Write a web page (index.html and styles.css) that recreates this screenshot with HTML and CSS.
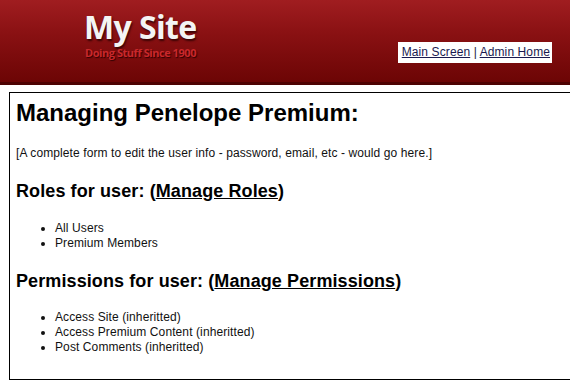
FILE: index.html
```html
<!DOCTYPE html>
<html>
<head>
<meta charset="utf-8">
<title>My Site</title>
<link rel="stylesheet" href="styles.css">
</head>
<body>
<div class="header">
  <div class="logo">
    <div class="logo-title">My Site</div>
    <div class="logo-tag">Doing Stuff Since 1900</div>
  </div>
  <div class="nav"><a href="#">Main Screen</a> | <a href="#">Admin Home</a></div>
</div>
<div class="content">
  <h1>Managing Penelope Premium:</h1>
  <p>[A complete form to edit the user info - password, email, etc - would go here.]</p>
  <h2>Roles for user: (<a href="#">Manage Roles</a>)</h2>
  <ul>
    <li>All Users</li>
    <li>Premium Members</li>
  </ul>
  <h2>Permissions for user: (<a href="#">Manage Permissions</a>)</h2>
  <ul class="perms">
    <li>Access Site (inheritted)</li>
    <li>Access Premium Content (inheritted)</li>
    <li>Post Comments (inheritted)</li>
  </ul>
</div>
</body>
</html>
```
FILE: styles.css
```css
html, body {
  margin: 0;
  padding: 0;
  overflow: hidden;
  background: #fff;
}
body {
  font-family: "Liberation Sans", Arial, sans-serif;
  color: #111;
}
.header {
  height: 82px;
  border-bottom: 3px solid #4e0303;
  background: linear-gradient(to bottom, #a01d20 0%, #8a1113 40%, #6c0505 100%);
  display: flex;
  justify-content: space-between;
  padding: 0 18px 0 84px;
}
.logo {
  padding-top: 8px;
}
.logo-title {
  font-family: "Open Sans", sans-serif;
  font-weight: 700;
  font-size: 32px;
  line-height: 38px;
  color: #f4f4f4;
  letter-spacing: -0.6px;
  text-shadow: 1px 2px 2px rgba(40, 0, 0, 0.8);
}
.logo-tag {
  font-family: "Open Sans", sans-serif;
  font-weight: 700;
  font-size: 11px;
  line-height: 14px;
  color: #c9282b;
  letter-spacing: -0.45px;
  text-shadow: 1px 1px 1px rgba(40, 0, 0, 0.9);
  margin-top: 0;
  padding-left: 1px;
}
.nav {
  align-self: flex-start;
  margin-top: 42px;
  background: #fff;
  padding: 0 2px 0 4px;
  font-size: 12px;
  letter-spacing: 0.1px;
  line-height: 21px;
  color: #1a1a40;
}
.nav a {
  color: #1a1a50;
}
.content {
  margin: 7px -20px 0 9px;
  border: 1px solid #000;
  padding: 6px 5px 24px 6px;
}
h1 {
  margin: 0;
  font-size: 24px;
  line-height: 28px;
  font-weight: 700;
  color: #000;
}
p {
  margin: 19px 0 0;
  font-size: 12px;
  line-height: 15px;
  letter-spacing: 0.1px;
  color: #111;
}
h2 {
  margin: 20px 0 0;
  font-size: 18px;
  line-height: 21px;
  letter-spacing: 0.1px;
  font-weight: 700;
  color: #000;
}
h2 a {
  color: #000;
}
ul {
  margin: 19px 0 0;
  padding-left: 39px;
  font-size: 12px;
  line-height: 15px;
  letter-spacing: 0.1px;
  color: #111;
}
ul.perms {
  margin-top: 18px;
}
```
